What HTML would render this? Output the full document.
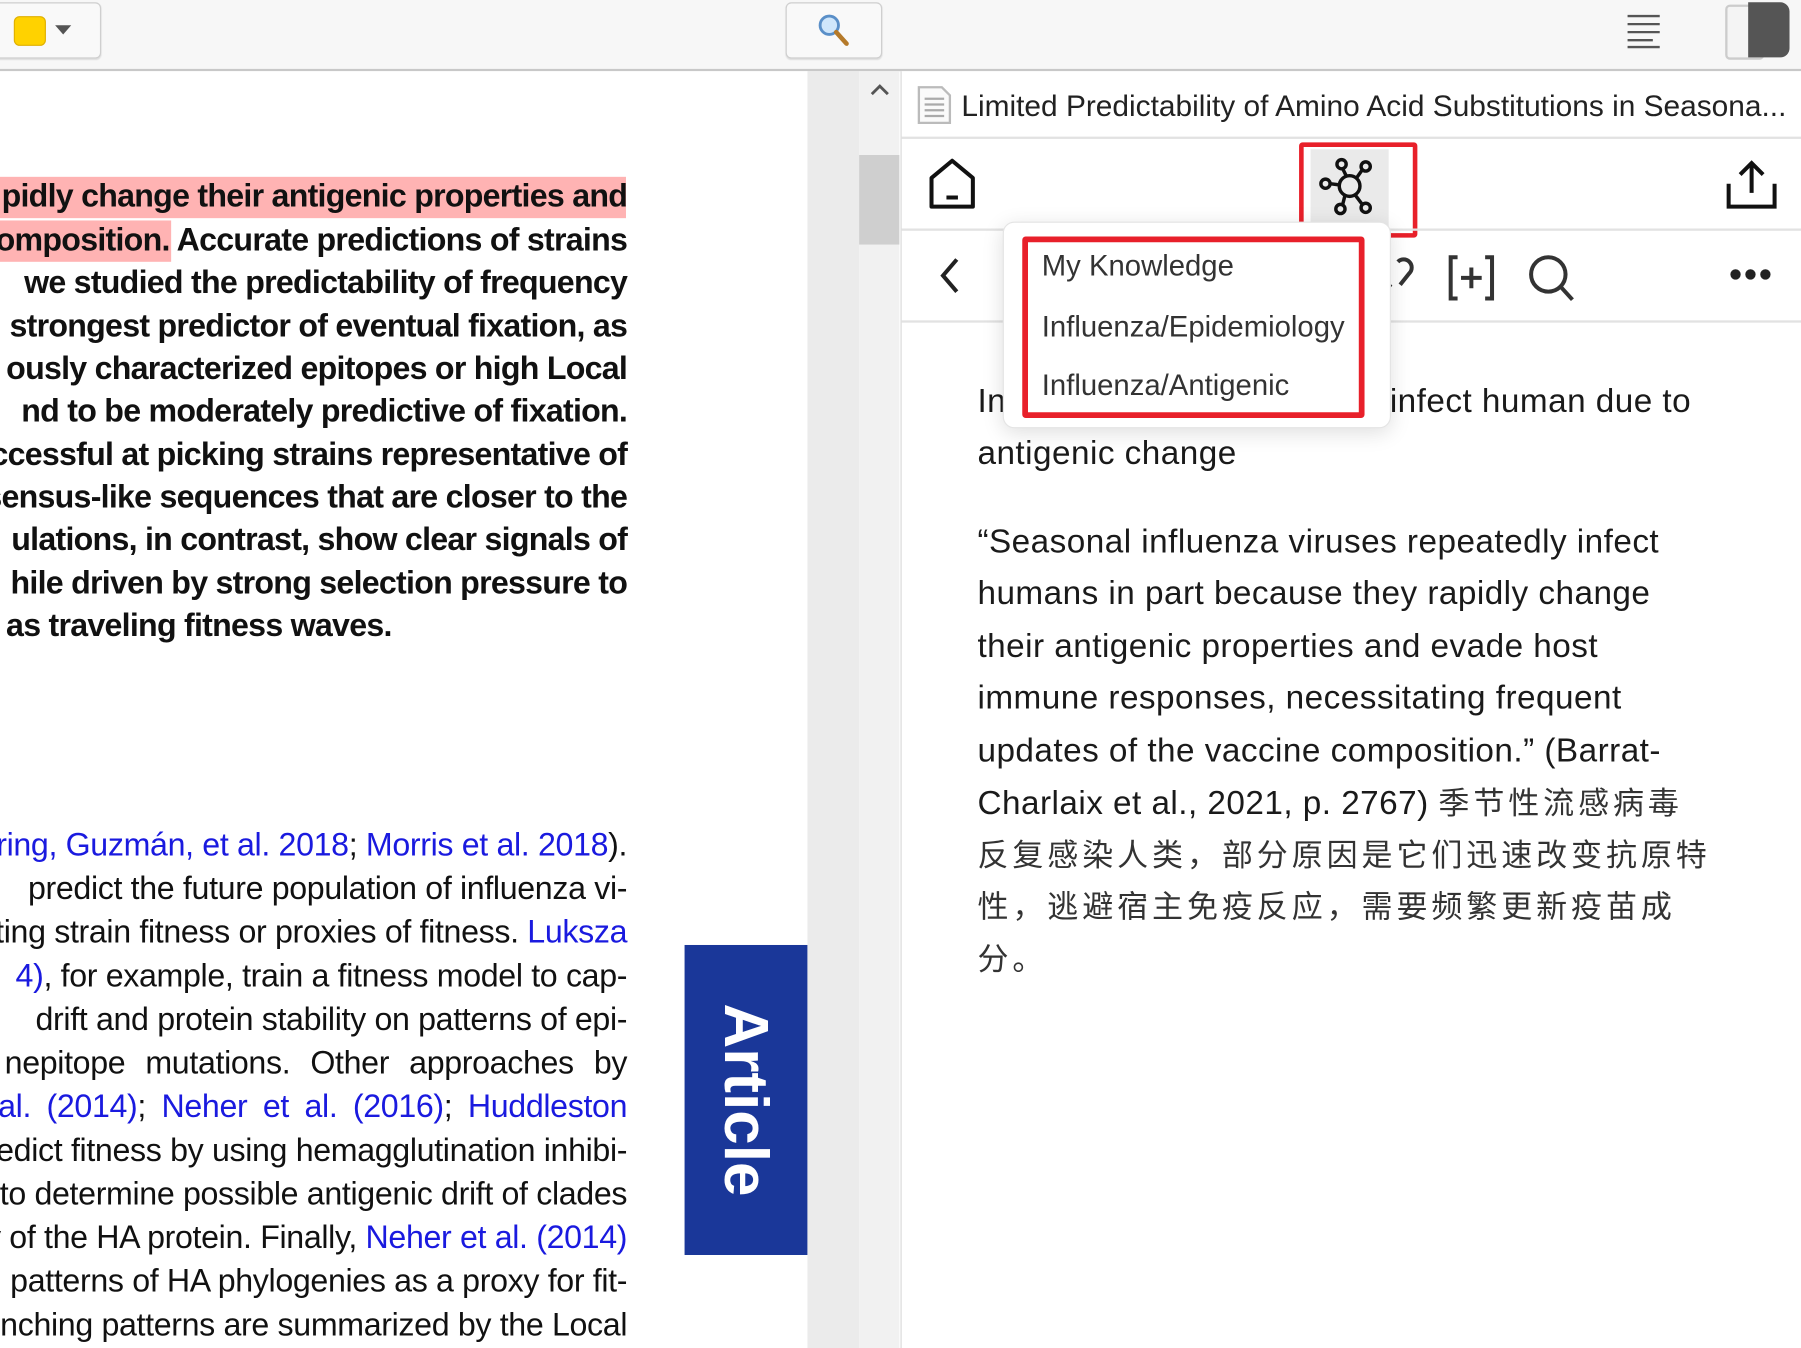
<!DOCTYPE html>
<html><head><meta charset="utf-8"><style>
html,body{margin:0;padding:0;overflow:hidden;background:#fff}
#w{width:1568px;height:1174px;position:relative;transform:scale(1.14860,1.14821);transform-origin:0 0;overflow:hidden;font-family:"Liberation Sans","Noto Sans CJK SC",sans-serif}
.a{position:absolute}
.top{left:0;top:0;width:1568px;height:60px;background:#f7f7f7;border-bottom:2px solid #c8c8c8}
.btn{background:#f9f9f9;border:1px solid #cfcfcf;border-radius:5px;box-shadow:0 1px 1px #ddd}
.lp{left:0;top:62px;width:703px;height:1112px;background:#fff;overflow:hidden}
.ln{position:absolute;right:157px;white-space:nowrap;font-size:28px;letter-spacing:-0.3px;color:#111;line-height:1}
.b{font-weight:bold;letter-spacing:-0.65px}
.bl{color:#1a1adf}
.rp{left:784px;top:62px;width:784px;height:1112px;background:#fff;border-left:1px solid #d8d8d8}
.hr{position:absolute;left:0;width:784px;height:2px;background:#e2e2e2}
.ct{position:absolute;left:66px;font-size:29px;letter-spacing:0.4px;color:#1a1a1a;white-space:nowrap;line-height:1}
.zh{font-size:27px;color:#333;letter-spacing:3.4px}
.mi{position:absolute;left:33px;font-size:25.5px;color:#333}
</style></head><body><div id="w">
<div class="a top"></div>
<div class="a btn" style="left:-10px;top:2px;width:96px;height:47px"></div>
<div class="a" style="left:12px;top:14px;width:26px;height:24px;background:#ffd200;border-radius:5px;border:1px solid #e0b000"></div>
<div class="a" style="left:48px;top:22px;width:0;height:0;border-left:7px solid transparent;border-right:7px solid transparent;border-top:8px solid #555"></div>
<div class="a btn" style="left:684px;top:2px;width:82px;height:47px"></div>
<svg class="a" style="left:708px;top:10px" width="36" height="32"><circle cx="14" cy="12" r="8" fill="#cfe6fb" stroke="#5a8fc8" stroke-width="2.5"/><line x1="20" y1="18" x2="29" y2="28" stroke="#b57a2a" stroke-width="4" stroke-linecap="round"/></svg>
<svg class="a" style="left:1415px;top:10px" width="32" height="34"><g stroke="#555" stroke-width="2"><line x1="2" y1="4" x2="30" y2="4"/><line x1="2" y1="11" x2="30" y2="11"/><line x1="2" y1="18" x2="30" y2="18"/><line x1="2" y1="25" x2="24" y2="25"/><line x1="2" y1="31" x2="30" y2="31"/></g></svg>
<div class="a" style="left:1502px;top:4px;width:30px;height:44px;border:2px solid #ccc;border-radius:4px;background:#f4f4f4"></div>
<div class="a" style="left:1522px;top:2px;width:36px;height:48px;background:#555;border-radius:0 8px 8px 0"></div>

<div class="a lp">
<div class="a" style="left:0;top:92px;width:545px;height:36px;background:#ffb3b3"></div>
<div class="a" style="left:0;top:130px;width:149px;height:36px;background:#ffb3b3"></div>
<div class="ln b" style="top:95px">pidly change their antigenic properties and</div>
<div class="ln b" style="top:133px">omposition. Accurate predictions of strains</div>
<div class="ln b" style="top:170px">we studied the predictability of frequency</div>
<div class="ln b" style="top:208px">strongest predictor of eventual fixation, as</div>
<div class="ln b" style="top:245px">ously characterized epitopes or high Local</div>
<div class="ln b" style="top:282px">nd to be moderately predictive of fixation.</div>
<div class="ln b" style="top:320px">ccessful at picking strains representative of</div>
<div class="ln b" style="top:357px">nsensus-like sequences that are closer to the</div>
<div class="ln b" style="top:394px">ulations, in contrast, show clear signals of</div>
<div class="ln b" style="top:432px">hile driven by strong selection pressure to</div>
<div class="ln b" style="top:469px;right:362px">as traveling fitness waves.</div>
<div class="ln" style="top:660px"><span class="bl">ering, Guzmán, et al. 2018</span>; <span class="bl">Morris et al. 2018</span>).</div>
<div class="ln" style="top:698px">predict the future population of influenza vi-</div>
<div class="ln" style="top:736px">ting strain fitness or proxies of fitness. <span class="bl">Luksza</span></div>
<div class="ln" style="top:774px"><span class="bl">4)</span>, for example, train a fitness model to cap-</div>
<div class="ln" style="top:812px">drift and protein stability on patterns of epi-</div>
<div class="ln" style="top:850px;word-spacing:10px">nepitope mutations. Other approaches by</div>
<div class="ln" style="top:888px;word-spacing:6px"><span class="bl">al. (2014)</span>; <span class="bl">Neher et al. (2016)</span>; <span class="bl">Huddleston</span></div>
<div class="ln" style="top:926px">edict fitness by using hemagglutination inhibi-</div>
<div class="ln" style="top:964px">to determine possible antigenic drift of clades</div>
<div class="ln" style="top:1002px">y of the HA protein. Finally, <span class="bl">Neher et al. (2014)</span></div>
<div class="ln" style="top:1040px">patterns of HA phylogenies as a proxy for fit-</div>
<div class="ln" style="top:1078px">nching patterns are summarized by the Local</div>
<div class="a" style="left:596px;top:761px;width:107px;height:270px;background:#1a3799"></div>
<div class="a" style="left:596px;top:761px;width:107px;height:270px;display:flex;align-items:center;justify-content:center"><div style="transform:rotate(90deg);color:#fff;font-weight:bold;font-size:54px;white-space:nowrap">Article</div></div>
</div>
<div class="a" style="left:703px;top:62px;width:45px;height:1112px;background:#ebebeb"></div>
<div class="a" style="left:748px;top:62px;width:35px;height:1112px;background:#f1f1f1"></div>
<div class="a" style="left:748px;top:135px;width:35px;height:78px;background:#cfcfcf"></div>
<svg class="a" style="left:756px;top:70px" width="20" height="16"><path d="M3 12 L10 5 L17 12" fill="none" stroke="#555" stroke-width="2.5"/></svg>

<div class="a rp">
<svg class="a" style="left:13px;top:12px" width="32" height="36"><path d="M2 2 H22 L29 9 V33 H2 Z" fill="#fafafa" stroke="#bbb" stroke-width="2"/><g stroke="#aaa" stroke-width="2"><line x1="7" y1="12" x2="24" y2="12"/><line x1="7" y1="17" x2="24" y2="17"/><line x1="7" y1="22" x2="24" y2="22"/><line x1="7" y1="27" x2="24" y2="27"/></g></svg>
<div class="a" style="left:52px;top:15px;font-size:26px;color:#222;white-space:nowrap">Limited Predictability of Amino Acid Substitutions in Seasona...</div>
<div class="hr" style="top:57px"></div>
<svg class="a" style="left:22px;top:74px" width="44" height="48"><path d="M4 44 V19 L22 4 L40 19 V44 Z" fill="none" stroke="#111" stroke-width="3.5" stroke-linejoin="round"/><line x1="17" y1="36" x2="27" y2="36" stroke="#111" stroke-width="3.5"/></svg>
<div class="a" style="left:356px;top:68px;width:68px;height:70px;background:#eaeaea"></div>
<svg class="a" style="left:360px;top:72px" width="60" height="60"><g fill="none" stroke="#111" stroke-width="3"><circle cx="30" cy="28" r="9"/><circle cx="9" cy="26" r="4"/><circle cx="23" cy="9" r="4"/><circle cx="44" cy="11" r="4"/><circle cx="22" cy="48" r="4"/><circle cx="44" cy="47" r="4"/><line x1="13" y1="26" x2="21" y2="27"/><line x1="24" y1="13" x2="27" y2="19"/><line x1="41" y1="14" x2="36" y2="21"/><line x1="24" y1="44" x2="26" y2="36"/><line x1="41" y1="44" x2="35" y2="36"/></g></svg>
<div class="a" style="left:346px;top:62px;width:95px;height:75px;border:4px solid #e8202a;border-radius:3px"></div>
<svg class="a" style="left:716px;top:76px" width="48" height="46"><g fill="none" stroke="#111" stroke-width="3.5"><path d="M4 22 V42 H44 V22"/><line x1="24" y1="4" x2="24" y2="30"/><path d="M14 14 L24 4 L34 14"/></g></svg>
<div class="hr" style="top:137px"></div>
<svg class="a" style="left:30px;top:160px" width="24" height="36"><path d="M18 4 L6 18 L18 32" fill="none" stroke="#222" stroke-width="3.5"/></svg>
<svg class="a" style="left:416px;top:158px" width="30" height="40"><path d="M10 30 L4 24 M16 8 A7 7 0 0 1 26 18 L18 28" fill="none" stroke="#333" stroke-width="3.5"/></svg>
<svg class="a" style="left:474px;top:158px" width="44" height="44"><g fill="none" stroke="#333" stroke-width="3.5"><path d="M10 4 H4 V40 H10"/><path d="M34 4 H40 V40 H34"/><line x1="22" y1="13" x2="22" y2="31"/><line x1="13" y1="22" x2="31" y2="22"/></g></svg>
<svg class="a" style="left:544px;top:158px" width="44" height="44"><g fill="none" stroke="#333" stroke-width="3.5"><circle cx="19" cy="19" r="15"/><line x1="30" y1="30" x2="40" y2="41"/></g></svg>
<svg class="a" style="left:720px;top:170px" width="40" height="14"><g fill="#222"><circle cx="6" cy="7" r="4.5"/><circle cx="19" cy="7" r="4.5"/><circle cx="32" cy="7" r="4.5"/></g></svg>
<div class="hr" style="top:217px"></div>
<div class="ct" style="top:274px">Influenza viruses repeated infect human due to</div>
<div class="ct" style="top:319px">antigenic change</div>
<div class="ct" style="top:396px">“Seasonal influenza viruses repeatedly infect</div>
<div class="ct" style="top:441px">humans in part because they rapidly change</div>
<div class="ct" style="top:487px">their antigenic properties and evade host</div>
<div class="ct" style="top:532px">immune responses, necessitating frequent</div>
<div class="ct" style="top:578px">updates of the vaccine composition.” (Barrat-</div>
<div class="ct" style="top:624px">Charlaix et al., 2021, p. 2767) <span class="zh">季节性流感病毒</span></div>
<div class="ct zh" style="top:670px">反复感染人类，部分原因是它们迅速改变抗原特</div>
<div class="ct zh" style="top:715px">性，逃避宿主免疫反应，需要频繁更新疫苗成</div>
<div class="ct zh" style="top:761px">分。</div>
<div class="a" style="left:88px;top:131px;width:336px;height:178px;background:#fff;border:1px solid #e4e4e4;border-radius:10px;box-shadow:0 4px 18px rgba(0,0,0,.13)">
<div class="a" style="left:16px;top:12px;width:288px;height:148px;border:5px solid #e8202a;border-radius:3px"></div>
<div class="mi" style="top:24px">My Knowledge</div>
<div class="mi" style="top:77px">Influenza/Epidemiology</div>
<div class="mi" style="top:128px">Influenza/Antigenic</div>
</div>
</div>
</div></body></html>
